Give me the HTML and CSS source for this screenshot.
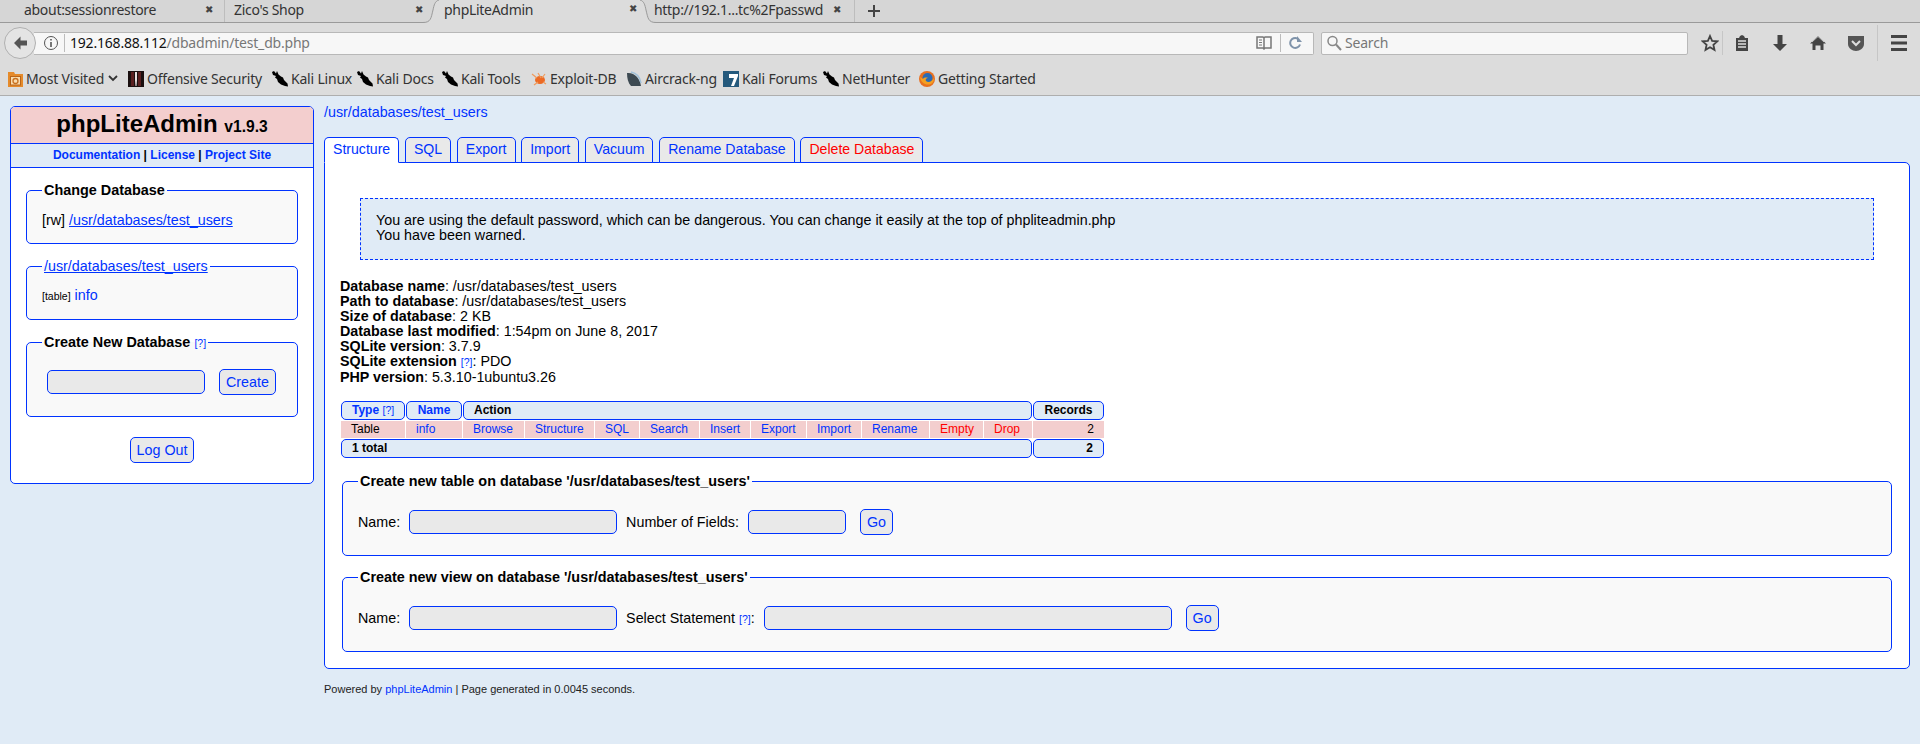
FILE: index.html
```html
<!DOCTYPE html>
<html lang="en">
<head>
<meta charset="utf-8">
<title>phpLiteAdmin</title>
<link rel="stylesheet" href="styles.css">
</head>
<body>
<svg class="defs" width="0" height="0" aria-hidden="true">
  <symbol id="kali" viewBox="0 0 16 16"><path d="M0 1 2 0 4 2.500 5 0 6.500 3.500 9 5.500 11 6.500 12 9 15.500 12.500 16 15.500 13 15 9 13.500 6 11 5 8 3 6.500 4 5 1 4z" fill="#000"/></symbol>
</svg>
<div class="chrome">
  <div class="tabbar">
    <div class="btab t1"><span class="btab-label">about:sessionrestore</span><span class="x">✖</span></div>
    <div class="btab t2"><span class="btab-label">Zico's Shop</span><span class="x">✖</span></div>
    <div class="btab t3 current"><svg class="curve curve-l" width="16" height="23" viewBox="0 0 16 23"><path d="M0 22.500C8 22.500 8 18 10 10 11 5 12 1 16 0V23H0z" fill="#dcdcdc"/><path d="M0 22.500C8 22.500 8 18 10 10 11 5 12 1 16 0" fill="none" stroke="#9a9a9a"/></svg><span class="btab-label">phpLiteAdmin</span><span class="x">✖</span><svg class="curve curve-r" width="16" height="23" viewBox="0 0 16 23"><path d="M16 22.500C8 22.500 8 18 6 10 5 5 4 1 0 0V23H16z" fill="#dcdcdc"/><path d="M16 22.500C8 22.500 8 18 6 10 5 5 4 1 0 0" fill="none" stroke="#9a9a9a"/></svg></div>
    <div class="btab t4"><span class="btab-label">http://192.1...tc%2Fpasswd</span><span class="x">✖</span></div>
    <svg class="plus" width="14" height="14" viewBox="0 0 14 14"><path d="M6 1h2v5h5v2H8v5H6V8H1V6h5z" fill="#444"/></svg>
  </div>
  <div class="navbar">
    <div class="back"><svg width="16" height="16" viewBox="0 0 16 16"><path d="M8.500 1.500 2 8l6.500 6.500V10.500H15v-5H8.500z" fill="#555"/></svg></div>
    <div class="urlbar">
      <svg class="info" width="16" height="16" viewBox="0 0 16 16"><circle cx="8" cy="8" r="6.500" fill="none" stroke="#555"/><path d="M7.200 4h1.600v1.600H7.200zM7.200 7h1.600v5H7.200z" fill="#555"/></svg>
      <span class="vsep"></span>
      <span class="url"><span class="host">192.168.88.112</span>/dbadmin/test_db.php</span>
      <svg class="reader" width="16" height="14" viewBox="0 0 16 14"><path d="M1 1h6l1 1 1-1h6v11H9l-1 1-1-1H1zM8 2v10" fill="none" stroke="#777" stroke-width="1.500"/><path d="M3 4h3M3 6.500h3M3 9h3" stroke="#777"/></svg>
      <span class="vsep"></span>
      <svg class="reload" width="14" height="16" viewBox="0 0 14 16"><path d="M11 9.500A5 5 0 1 1 8.500 3.500" fill="none" stroke="#7f93aa" stroke-width="2"/><path d="M8 1v6h5z" fill="#7f93aa"/></svg>
    </div>
    <div class="searchbar">
      <svg width="16" height="16" viewBox="0 0 16 16"><circle cx="6.500" cy="6" r="4.500" fill="none" stroke="#888" stroke-width="1.500"/><path d="m10 9.500 5 5.500" stroke="#888" stroke-width="2"/></svg>
      <span class="search-label">Search</span>
    </div>
    <div class="tools">
      <svg class="tool-star" width="18" height="18" viewBox="0 0 18 18"><path d="m9 2 2.100 4.800 5.200.5-3.900 3.500 1.100 5.100L9 13.300l-4.500 2.600 1.100-5.100-3.900-3.500 5.200-.5z" fill="none" stroke="#444" stroke-width="1.800"/></svg>
      <span class="tool-sep"></span>
      <svg class="tool" width="16" height="18" viewBox="0 0 16 18"><path d="M2 4h3l1-2 2-1 2 1 1 2h3v13H2z" fill="#444"/><path d="M4 7h8M4 10h8M4 13h8" stroke="#ddd" stroke-width="1.300"/></svg>
      <svg class="tool" width="16" height="18" viewBox="0 0 16 18"><path d="M5.500 1h5v9H15l-7 7-7-7h4.500z" fill="#444"/></svg>
      <svg class="tool" width="16" height="18" viewBox="0 0 16 18"><path d="M8 2 16 9.500h-2.500V16h-3v-4.500h-5V16h-3V9.500H0z" fill="#444"/><path d="m2 8 6-5.500 6 5.500" fill="none" stroke="#ddd" stroke-width=".8"/></svg>
      <svg class="tool" width="16" height="18" viewBox="0 0 16 18"><path d="M0 2h16v8c0 4-4 7-8 7s-8-3-8-7z" fill="#555"/><path d="m4 7 4 4 4-4" fill="none" stroke="#ddd" stroke-width="2"/></svg>
      <span class="tool-sep tall"></span>
      <svg class="tool-menu" width="16" height="16" viewBox="0 0 16 16"><path d="M0 1.500h16M0 8h16M0 14.500h16" stroke="#444" stroke-width="3"/></svg>
    </div>
  </div>
  <div class="bookmarks">
    <div class="bm bm-most"><svg width="15" height="16" viewBox="0 0 15 16"><path d="M0 1h6l1 2h8v13H0z" fill="#e58a2a"/><rect x="2.500" y="5.500" width="10" height="8.500" fill="#f9dcae" stroke="#b8651a"/><circle cx="7.500" cy="10" r="2.500" fill="none" stroke="#c9701f" stroke-width="1.300"/></svg><span>Most Visited</span><svg class="chev" width="10" height="7" viewBox="0 0 10 7"><path d="m1 1 4 4 4-4" fill="none" stroke="#333" stroke-width="1.800"/></svg></div>
    <div class="bm bm-off"><svg width="16" height="16" viewBox="0 0 16 16"><rect width="16" height="16" fill="#1a0f0f"/><path d="M3 1h3v14H3zM10 1h3v14h-3z" fill="#5a1f1f"/><path d="M7 1h2v8l-.5 6h-1L7 9z" fill="#e8dede"/></svg><span>Offensive Security</span></div>
    <div class="bm bm-k1"><svg width="16" height="16"><use href="#kali"/></svg><span>Kali Linux</span></div>
    <div class="bm bm-k2"><svg width="16" height="16"><use href="#kali"/></svg><span>Kali Docs</span></div>
    <div class="bm bm-k3"><svg width="16" height="16"><use href="#kali"/></svg><span>Kali Tools</span></div>
    <div class="bm bm-edb"><svg width="16" height="16" viewBox="0 0 16 16"><ellipse cx="9" cy="9" rx="5" ry="4" fill="#ec6a24"/><path d="M1 3 6 7M3 14l4-3M7 2l3 5M14 3l-3 4M15 13l-3-2" stroke="#f09a5a" stroke-width="1.200"/></svg><span>Exploit-DB</span></div>
    <div class="bm bm-air"><svg width="16" height="16" viewBox="0 0 16 16"><path d="M1 2C8 1 14 7 15 15H5C2 12 1 7 1 2z" fill="#3d4a52"/><path d="M5 1c5 1 9 5 10 11" fill="none" stroke="#9fc0d8" stroke-width="1.500"/></svg><span>Aircrack-ng</span></div>
    <div class="bm bm-forum"><svg width="16" height="16" viewBox="0 0 16 16"><rect width="16" height="16" fill="#24597c"/><path d="M6 3h9v2l-4 10H8l3-8H6z" fill="#fff"/></svg><span>Kali Forums</span></div>
    <div class="bm bm-net"><svg width="16" height="16"><use href="#kali"/></svg><span>NetHunter</span></div>
    <div class="bm bm-ff"><svg width="16" height="16" viewBox="0 0 16 16"><circle cx="8" cy="8" r="8" fill="#e8701f"/><circle cx="8.500" cy="7" r="5" fill="#2a6bb5"/><path d="M1 6c1 6 6 9 11 7 2-1 3-3 3-6-2 4-6 5-8 3-1-1 0-3 2-3-2-1-5 0-5 1z" fill="#f4a021"/></svg><span>Getting Started</span></div>
  </div>
</div>

<div class="page">
  <aside class="sidebar">
    <h1 class="brand">phpLiteAdmin <span class="version">v1.9.3</span></h1>
    <div class="doclinks"><a href="#">Documentation</a> | <a href="#">License</a> | <a href="#">Project Site</a></div>
    <div class="side-body">
      <fieldset class="side-set set-a">
        <legend>Change Database</legend>
        <div class="side-line">[rw] <a class="ul" href="#">/usr/databases/test_users</a></div>
      </fieldset>
      <fieldset class="side-set set-b">
        <legend class="legend-link"><a class="ul" href="#">/usr/databases/test_users</a></legend>
        <div class="side-line"><span class="kind">[table]</span> <a href="#">info</a></div>
      </fieldset>
      <fieldset class="side-set set-c">
        <legend>Create New Database <a class="help" href="#">[?]</a></legend>
        <div class="create-row"><input class="field w-side" type="text"><button class="btn">Create</button></div>
      </fieldset>
      <div class="logout"><button class="btn">Log Out</button></div>
    </div>
  </aside>

  <main class="main">
    <a class="crumb" href="#">/usr/databases/test_users</a>
    <nav class="tabs">
      <a class="tab active" href="#">Structure</a>
      <a class="tab" href="#">SQL</a>
      <a class="tab" href="#">Export</a>
      <a class="tab" href="#">Import</a>
      <a class="tab" href="#">Vacuum</a>
      <a class="tab" href="#">Rename Database</a>
      <a class="tab danger" href="#">Delete Database</a>
    </nav>
    <section class="panel">
      <div class="warning">You are using the default password, which can be dangerous. You can change it easily at the top of phpliteadmin.php<br>You have been warned.</div>
      <div class="dbinfo">
        <div><b>Database name</b>: /usr/databases/test_users</div>
        <div><b>Path to database</b>: /usr/databases/test_users</div>
        <div><b>Size of database</b>: 2 KB</div>
        <div><b>Database last modified</b>: 1:54pm on June 8, 2017</div>
        <div><b>SQLite version</b>: 3.7.9</div>
        <div><b>SQLite extension</b> <a class="help" href="#">[?]</a>: PDO</div>
        <div><b>PHP version</b>: 5.3.10-1ubuntu3.26</div>
      </div>
      <table class="grid">
        <colgroup>
          <col class="c-type"><col class="c-name"><col class="c-browse"><col class="c-structure"><col class="c-sql"><col class="c-search"><col class="c-insert"><col class="c-export"><col class="c-import"><col class="c-rename"><col class="c-empty"><col class="c-drop"><col class="c-records">
        </colgroup>
        <thead>
          <tr>
            <th class="head type"><a href="#">Type</a> <a class="help plain" href="#">[?]</a></th>
            <th class="head center"><a href="#">Name</a></th>
            <th class="head action" colspan="10">Action</th>
            <th class="head center">Records</th>
          </tr>
        </thead>
        <tbody>
          <tr>
            <td>Table</td>
            <td><a href="#">info</a></td>
            <td><a href="#">Browse</a></td>
            <td><a href="#">Structure</a></td>
            <td><a href="#">SQL</a></td>
            <td><a href="#">Search</a></td>
            <td><a href="#">Insert</a></td>
            <td><a href="#">Export</a></td>
            <td><a href="#">Import</a></td>
            <td><a href="#">Rename</a></td>
            <td><a class="red" href="#">Empty</a></td>
            <td><a class="red" href="#">Drop</a></td>
            <td class="num">2</td>
          </tr>
        </tbody>
        <tfoot>
          <tr>
            <td class="head total" colspan="12">1 total</td>
            <td class="head total num">2</td>
          </tr>
        </tfoot>
      </table>
      <fieldset class="form-set first">
        <legend>Create new table on database '/usr/databases/test_users'</legend>
        <div class="form-row">
          <label>Name:</label><input class="field w-name" type="text">
          <label>Number of Fields:</label><input class="field w-num" type="text">
          <button class="btn go">Go</button>
        </div>
      </fieldset>
      <fieldset class="form-set">
        <legend>Create new view on database '/usr/databases/test_users'</legend>
        <div class="form-row">
          <label>Name:</label><input class="field w-name" type="text">
          <label>Select Statement <a class="help" href="#">[?]</a>:</label><input class="field w-stmt" type="text">
          <button class="btn go">Go</button>
        </div>
      </fieldset>
    </section>
    <div class="powered">Powered by <a href="#">phpLiteAdmin</a> | Page generated in 0.0045 seconds.</div>
  </main>
</div>
</body>
</html>
```
FILE: styles.css
```css
* { box-sizing: border-box; }
html, body { margin: 0; padding: 0; height: 100%; overflow: hidden; }
body { background: #e0ebf6; font-family: "Liberation Sans", Arial, sans-serif; font-size: 14.3px; color: #000; }
a { color: #03f; text-decoration: none; }
a.ul { text-decoration: underline; }
.defs { position: absolute; }

/* browser chrome */
.chrome { height: 96px; background: #dcdcdc; border-bottom: 1px solid #aeaeae; font-family: "Noto Sans", sans-serif; color: #333; }
.tabbar { height: 23px; background: #d6d6d6; border-bottom: 1px solid #9a9a9a; display: flex; align-items: center; font-size: 14px; }
.btab { height: 22px; display: flex; align-items: center; position: relative; }
.btab-label { letter-spacing: -0.3px; white-space: nowrap; padding-bottom: 4px; }
.x { position: absolute; font-size: 10px; color: #444; top: 2px; }
.t1 { width: 225px; padding-left: 24px; border-right: 1px solid #bdbdbd; }
.t1 .x { left: 205px; }
.t2 { width: 214px; padding-left: 9px; }
.t2 .x { left: 190px; }
.t3 { width: 201px; padding-left: 5px; height: 23px; background: #dcdcdc; margin-top: 1px; }
.t3 .x { left: 190px; top: 1px; }
.curve { position: absolute; top: 0; }
.curve-l { left: -16px; }
.curve-r { right: -16px; }
.t4 { width: 215px; padding-left: 14px; border-right: 1px solid #bdbdbd; }
.t4 .x { left: 193px; }
.plus { margin-left: 12px; }

.navbar { height: 37px; display: flex; align-items: center; padding: 3px 0 0 4px; }
.back { width: 32px; height: 32px; border-radius: 50%; border: 1px solid #b0b0b0; background: #e4e4e4; display: flex; align-items: center; justify-content: center; flex: none; z-index: 1; }
.urlbar { margin-left: -2px; width: 1280px; height: 23px; background: #f7f7f7; border: 1px solid #b8b8b8; border-left: 0; border-radius: 0 2px 2px 0; display: flex; align-items: center; padding: 0 10px 0 9px; font-size: 14px; flex: none; }
.info { flex: none; margin-right: 5px; }
.vsep { width: 1px; height: 18px; background: #bcbcbc; flex: none; }
.url { flex: 1; margin-left: 5px; padding-bottom: 2px; color: #777; letter-spacing: -0.2px; white-space: nowrap; }
.host { color: #111; }
.reader { margin-right: 8px; flex: none; }
.reload { margin-left: 8px; flex: none; }
.searchbar { margin-left: 7px; width: 367px; height: 23px; background: #f7f7f7; border: 1px solid #b8b8b8; border-radius: 2px; display: flex; align-items: center; padding-left: 4px; font-size: 14px; color: #777; flex: none; }
.search-label { margin-left: 3px; padding-bottom: 2px; letter-spacing: -0.2px; }
.tools { display: flex; align-items: center; margin-left: 13px; }
.tool-star { flex: none; }
.tool-sep { width: 1px; height: 24px; background: #c6c6c6; margin-left: 3px; flex: none; }
.tool-sep.tall { height: 36px; margin-left: 5px; }
.tool { margin-left: 14px; flex: none; margin-right: 8px; }
.tool-sep + .tool { margin-left: 11px; }
.tool-menu { margin-left: 13px; flex: none; }

.bookmarks { height: 35px; padding-top: 2px; display: flex; align-items: center; font-size: 14px; }
.bm { display: flex; align-items: center; gap: 3px; white-space: nowrap; letter-spacing: -0.2px; flex: none; }
.bm svg { flex: none; }
.chev { margin-left: 1px; }
.bm-most { margin-left: 8px; width: 120px; }
.bm-off { width: 144px; }
.bm-k1 { width: 85px; }
.bm-k2 { width: 85px; }
.bm-k3 { width: 89px; }
.bm-edb { width: 95px; }
.bm-air { width: 97px; }
.bm-forum { width: 100px; }
.bm-net { width: 96px; }
.bm-ff { width: 120px; }

/* page layout */
.page { display: flex; align-items: flex-start; padding: 10px 0 0 10px; }
.sidebar { width: 304px; height: 378px; flex: none; background: #fff; border: 1px solid #03f; border-radius: 5px; overflow: hidden; }
.brand { margin: 0; height: 37px; background: #f3cece; border-bottom: 1px solid #03f; text-align: center; font-size: 24px; line-height: 33px; font-weight: bold; }
.version { font-size: 15.6px; }
.doclinks { height: 24px; background: #e0ebf6; border-bottom: 1px solid #03f; text-align: center; font-size: 12px; font-weight: bold; line-height: 22px; }
.side-body { padding: 14px 15px 0; }
fieldset { margin: 0; background: #f9f9f9; border: 1px solid #03f; border-radius: 5px; min-width: 0; }
legend { font-weight: bold; padding: 0 2px; font-size: 14.4px; }
.side-set { padding: 0 15px; margin-bottom: 14px; }
.set-a { height: 62px; }
.set-b { height: 62px; }
.set-c { height: 83px; }
.side-line { padding-top: 14px; }
.legend-link { font-weight: normal; font-size: 14.3px; }
.set-b .side-line { padding-top: 13px; }
.kind { font-size: 10.5px; }
.help { font-size: 10.5px; font-weight: normal; }
.create-row { display: flex; align-items: center; padding: 19px 0 0 5px; }
.field { height: 24px; background: #e9e9e9; border: 1px solid #03f; border-radius: 5px; padding: 0; display: block; flex: none; }
.w-side { width: 158px; margin-right: 14px; }
.btn { height: 26px; background: #e9e9e9; border: 1px solid #03f; border-radius: 5px; color: #03f; font-family: "Liberation Sans", Arial, sans-serif; font-size: 14.3px; padding: 0 6px; }
.logout { text-align: center; margin-top: 20px; }

.main { width: 1586px; margin-left: 10px; flex: none; }
.crumb { display: block; height: 31px; line-height: 13px; }
.tabs { display: flex; gap: 5.7px; position: relative; z-index: 1; height: 26px; font-size: 14.1px; }
.tab { height: 26px; background: #e9e9e9; border: 1px solid #03f; border-radius: 5px 5px 0 0; padding: 0 8px; line-height: 22px; }
.tab.active { background: #fff; border-bottom-color: #fff; }
.tab.danger { color: #f00; }
.panel { margin-top: -1px; height: 507px; background: #fff; border: 1px solid #03f; border-radius: 0 5px 5px 5px; padding: 35px 16px 0 15px; }
.warning { margin: 0 0 0 20px; width: 1514px; height: 62px; background: #e0ebf6; border: 1px dashed #03f; padding: 14px 15px; line-height: 15px; }
.dbinfo { margin-top: 19px; line-height: 15px; }
.grid { margin: 15px 0 0; width: 765px; table-layout: fixed; border-collapse: separate; border-spacing: 1px; font-size: 12px; }
.c-type { width: 64px; } .c-name { width: 56px; } .c-browse { width: 61px; } .c-structure { width: 69px; }
.c-sql { width: 44px; } .c-search { width: 59px; } .c-insert { width: 50px; } .c-export { width: 55px; }
.c-import { width: 54px; } .c-rename { width: 67px; } .c-empty { width: 53px; } .c-drop { width: 48px; } .c-records { width: 71px; }
.grid th, .grid td { padding: 0 0 0 10px; height: 17px; line-height: 15px; }
.grid td { background: #f3cece; text-align: left; color: #000; }
.grid .head { height: 19px; background: #e0ebf6; border: 1px solid #03f; border-radius: 5px; font-weight: bold; text-align: left; }
.grid .center { text-align: center; padding-left: 0; }
.grid .total { text-align: left; padding-left: 10px; }
.grid .total.num { text-align: right; padding-right: 10px; }
.grid td.num { text-align: right; padding-right: 10px; }
.grid a.red { color: #f00; }
.form-set { width: 1550px; margin: 13px 0 0 2px; height: 83px; padding: 0 15px; }
.form-set legend { padding: 0 2px; }
.first { margin-top: 14px; }
.form-row { display: flex; align-items: center; height: 26px; margin-top: 20px; }
.form-row label { margin-right: 9px; }
.w-name { width: 208px; margin-right: 9px; }
.w-num { width: 98px; margin-right: 14px; }
.w-stmt { width: 408px; margin-right: 14px; }
.go { padding: 0; width: 33px; }
.powered { margin-top: 14px; font-size: 11px; color: #222; }
```
